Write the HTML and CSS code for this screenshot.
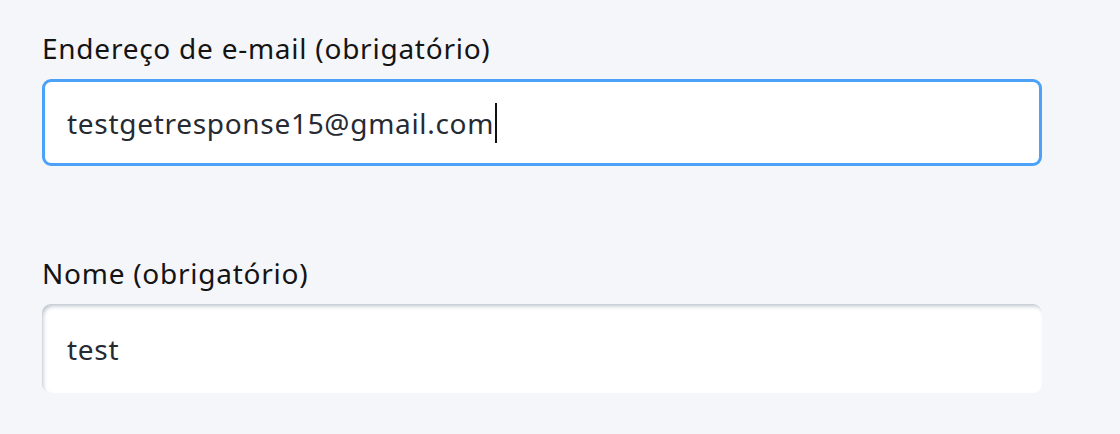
FILE: index.html
```html
<!DOCTYPE html>
<html lang="pt">
<head>
<meta charset="utf-8">
<link rel="stylesheet" href="styles.css">
</head>
<body>
<form class="form">
  <div class="field">
    <label class="label">Endereço de e-mail (obrigatório)</label>
    <div class="input input--focus"><span class="value">testgetresponse15@gmail.com</span><span class="caret"></span></div>
  </div>
  <div class="field">
    <label class="label">Nome (obrigatório)</label>
    <div class="input input--plain"><span class="value">test</span></div>
  </div>
</form>
</body>
</html>
```
FILE: styles.css
```css
html, body {
  margin: 0;
  padding: 0;
  background: #f5f6fa;
  font-family: "Noto Sans", "Open Sans", sans-serif;
}
.form {
  padding: 28px 0 0 42px;
  display: flex;
  flex-direction: column;
  gap: 87px;
}
.field {
  display: flex;
  flex-direction: column;
  gap: 11px;
  width: 1000px;
}
.label {
  font-size: 28px;
  line-height: 40px;
  letter-spacing: 0.75px;
  color: #141414;
}
.input {
  box-sizing: border-box;
  height: 87px;
  border-radius: 9px;
  background: #fff;
  display: flex;
  align-items: center;
  padding-left: 22px;
  font-size: 28px;
  letter-spacing: 0.7px;
  color: #262b33;
}
.input--focus {
  border: 3px solid #4ba2f7;
}
.input--plain {
  height: 89px;
  padding-left: 25px;
  box-shadow: inset 2px 3px 4px -1px rgba(140, 152, 170, 0.6);
}
.caret {
  display: inline-block;
  width: 2px;
  height: 40px;
  background: #111;
  margin-left: 1px;
}
```
